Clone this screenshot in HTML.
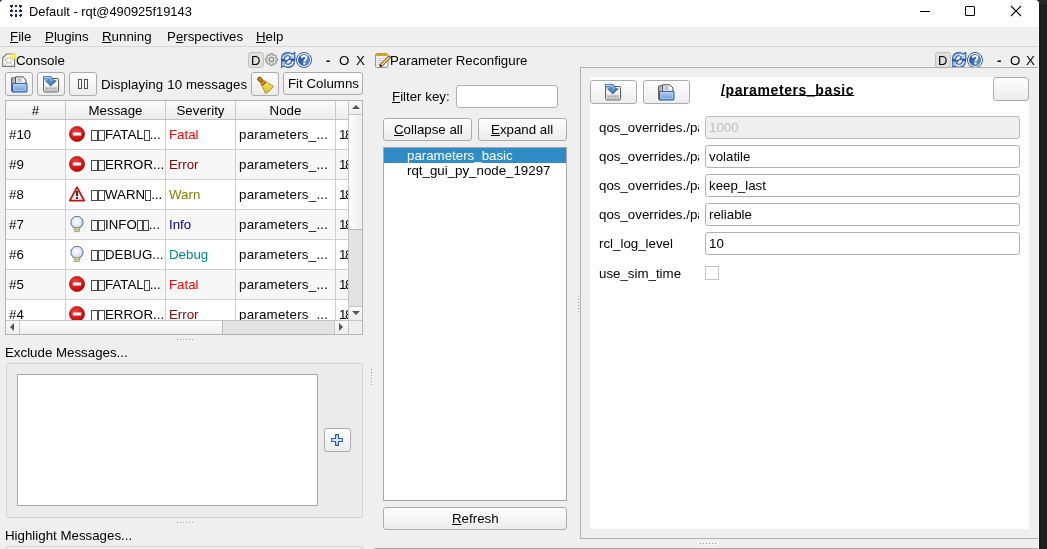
<!DOCTYPE html><html><head><meta charset="utf-8"><style>
*{margin:0;padding:0;box-sizing:content-box}
html,body{width:1047px;height:549px;overflow:hidden;background:#efefef;font-family:"Liberation Sans",sans-serif;color:#000}
.a{position:absolute}
.t{position:absolute;line-height:15px;white-space:nowrap;font-size:13.3px;will-change:transform}
.btn{position:absolute;border:1px solid #acacac;border-radius:3px;background:linear-gradient(#fefefe,#ececec)}
.u{text-decoration:underline;text-underline-offset:1px}
.tofu{display:inline-block;width:5px;height:9px;border:1px solid #4a4a4a;vertical-align:-2px;margin-right:0px}
.le{position:absolute;border:1px solid #b0b0b0;border-radius:3px;background:#fff}
.dot{position:absolute;width:1px;height:1px;background:#9a9a9a;box-shadow:1px 1px 0 #fff}
</style></head><body><div class="a" style="left:0px;top:0px;width:1039px;height:27px;background:#fff"></div><svg class="a" style="left:9px;top:4px" width="15" height="15" viewBox="0 0 15 15"><g fill="#1c2868"><path d="M1 1h3v2h-1v1h-1v-1h-1z"/><rect x="6" y="1" width="2" height="2"/><path d="M10 1h3v2h-1v1h-1v-1h-1z"/><path d="M2 5h1v1h1v2h-3v-2h1z"/><rect x="6" y="6" width="2" height="2"/><path d="M11 5h1v1h1v2h-3v-2h1z"/><path d="M1 10h2v1h1v1h-1v1h-1v-1h-1z"/><rect x="6" y="10" width="2" height="3"/><path d="M11 10h2v2h-1v1h-1v-1h-1v-1h1z"/></g></svg><div class="t" style="left:28.6px;top:3.8000000000000007px;font-size:12.9px;color:#000">Default - rqt@490925f19143</div><div class="a" style="left:920px;top:11px;width:10px;height:1px;background:#000"></div><div class="a" style="left:965px;top:6px;width:8px;height:8px;border:1px solid #000;border-radius:1px"></div><svg class="a" style="left:1010px;top:5px" width="12" height="12"><path d="M1 1L11 11M11 1L1 11" stroke="#000" stroke-width="1.1"/></svg><div class="a" style="left:0px;top:46px;width:1039px;height:1px;background:#d6d6d6"></div><div class="t" style="left:10.3px;top:29px;font-size:13.3px;"><span class="u">F</span>ile</div><div class="t" style="left:45.1px;top:29px;font-size:13.3px;"><span class="u">P</span>lugins</div><div class="t" style="left:102.3px;top:29px;font-size:13.3px;"><span class="u">R</span>unning</div><div class="t" style="left:166.5px;top:29px;font-size:13.3px;">P<span class="u">e</span>rspectives</div><div class="t" style="left:256.3px;top:29px;font-size:13.3px;"><span class="u">H</span>elp</div><svg class="a" style="left:2px;top:53px" width="15" height="15" viewBox="0 0 15 15"><path d="M0.7 5 L4.7 1 H12.6 V13.4 H0.7 Z" fill="#fafafa" stroke="#787878" stroke-width="1.1" stroke-linejoin="round"/><path d="M2.3 6.8 C4 4.6 9 4.4 11 6.8 M3 6.5 L5.6 9.8 L2.8 12.2 M10.6 6.5 L8 9.8 L10.8 12.2 M5.6 9.8 H8" fill="none" stroke="#b0b0b0" stroke-width="0.9"/><circle cx="10.8" cy="3.3" r="2.9" fill="#f3ee2a"/><circle cx="10.8" cy="3.3" r="1.2" fill="#fffccc"/></svg><div class="t" style="left:16px;top:53px;font-size:13.3px;">Console</div><div class="a" style="left:248px;top:52px;width:14px;height:14px;border:1px solid #c2c2c2;border-radius:3px;background:#e0e0e0"></div><div class="t" style="left:250.5px;top:53px;font-size:13.3px;font-size:13px">D</div><svg class="a" style="left:264px;top:52px" width="15" height="15" viewBox="0 0 15 15"><path d="M11.47 5.85 L13.41 6.46 L13.41 8.54 L11.47 9.15 L11.47 9.15 L12.41 10.94 L10.94 12.41 L9.15 11.47 L9.15 11.47 L8.54 13.41 L6.46 13.41 L5.85 11.47 L5.85 11.47 L4.06 12.41 L2.59 10.94 L3.53 9.15 L3.53 9.15 L1.59 8.54 L1.59 6.46 L3.53 5.85 L3.53 5.85 L2.59 4.06 L4.06 2.59 L5.85 3.53 L5.85 3.53 L6.46 1.59 L8.54 1.59 L9.15 3.53 L9.15 3.53 L10.94 2.59 L12.41 4.06 L11.47 5.85 Z" fill="#e4e7e0" stroke="#7c7c7c" stroke-width="1" stroke-linejoin="round"/><circle cx="7.5" cy="7.5" r="2.3" fill="#d6d9d2" stroke="#8a8a8a" stroke-width="1.1"/><circle cx="7.5" cy="7.5" r="0.8" fill="#f4f4f4"/></svg><svg class="a" style="left:281px;top:52px" width="15" height="16" viewBox="0 0 15 16"><defs><linearGradient id="rf281" x1="0" y1="0" x2="1" y2="1"><stop offset="0" stop-color="#5f8fd0"/><stop offset="0.55" stop-color="#e2edf9"/><stop offset="1" stop-color="#9bbde6"/></linearGradient></defs><g fill="url(#rf281)" stroke="#2a5aa5" stroke-width="1.1" stroke-linejoin="miter"><path d="M0.5 7.4 C0.5 2.6 3.6 0.6 7 0.6 C9 0.6 10.4 1.2 11.4 2.2 L13.8 0.3 V7.4 H7.6 L9.6 5.2 C8.8 4.2 7.9 3.7 7 3.7 C4.8 3.7 3.5 5.2 3.5 7.4 Z"/><path d="M13.5 8.6 C13.5 13.4 10.4 15.4 7 15.4 C5 15.4 3.6 14.8 2.6 13.8 L0.2 15.7 V8.6 H6.4 L4.4 10.8 C5.2 11.8 6.1 12.3 7 12.3 C9.2 12.3 10.5 10.8 10.5 8.6 Z"/></g></svg><svg class="a" style="left:296px;top:52px" width="16" height="16" viewBox="0 0 16 16"><defs><linearGradient id="hg296" x1="0" y1="0" x2="1" y2="0.3"><stop offset="0" stop-color="#1f4e98"/><stop offset="1" stop-color="#5c8bcb"/></linearGradient></defs><circle cx="8" cy="8" r="7.5" fill="#fff" stroke="#2b57a0" stroke-width="1"/><circle cx="8" cy="8" r="5.6" fill="url(#hg296)" stroke="#244f96" stroke-width="0.6"/><path d="M5.8 5.9 C5.8 3.2 10.4 3.2 10.4 5.9 C10.4 7.6 8.4 7.6 8.4 9.4" fill="none" stroke="#fff" stroke-width="1.9"/><rect x="7.3" y="10.4" width="2.2" height="2" fill="#fff"/></svg><div class="t" style="left:325.5px;top:53px;font-size:13.3px;font-weight:bold">-</div><div class="t" style="left:339px;top:53px;font-size:13.3px;">O</div><div class="t" style="left:355.5px;top:53px;font-size:13.3px;">X</div><div class="btn" style="left:5px;top:72px;width:26px;height:22px;"></div><svg class="a" style="left:11px;top:76px" width="17" height="17" viewBox="0 0 17 17"><defs><linearGradient id="sg11" x1="0" y1="0" x2="0" y2="1"><stop offset="0" stop-color="#b4cdee"/><stop offset="1" stop-color="#6f9bd6"/></linearGradient><linearGradient id="pg11" x1="0" y1="0" x2="1" y2="0"><stop offset="0" stop-color="#9a9a9a"/><stop offset="1" stop-color="#d8d8d8"/></linearGradient></defs><rect x="0.6" y="1.8" width="4" height="14" rx="0.8" fill="url(#pg11)" stroke="#505050" stroke-width="0.9"/><path d="M4.6 0.8 H11.8 L15 4 V8 H4.6 Z" fill="#f4f4f4" stroke="#3c3c3c" stroke-width="0.9"/><path d="M6.5 3H10.5M6.5 5H10.5" stroke="#8c8c8c" stroke-width="0.9"/><rect x="1.5" y="7.4" width="14.5" height="8.6" rx="0.6" fill="url(#sg11)" stroke="#2b5ea9" stroke-width="1"/><rect x="2.9" y="8.9" width="11.7" height="5.6" fill="none" stroke="#c4d8f2" stroke-width="0.7" opacity="0.8"/></svg><div class="btn" style="left:37px;top:72px;width:26px;height:22px;"></div><svg class="a" style="left:43px;top:76px" width="17" height="17" viewBox="0 0 17 17"><defs><linearGradient id="ig43" x1="0" y1="0" x2="1" y2="1"><stop offset="0" stop-color="#8fc0ea"/><stop offset="1" stop-color="#2a68aa"/></linearGradient></defs><rect x="0.6" y="2.5" width="15" height="13.4" rx="1.2" fill="#f6f6f6" stroke="#585858" stroke-width="1"/><rect x="1.6" y="10.6" width="13" height="4.4" fill="#cdcdcd"/><path d="M3 12.8H5M6.5 12.8H8M9.5 12.8H11M12 12.8H13.5" stroke="#9a9a9a" stroke-width="1"/><path d="M0.2 0.3 H5.5 C8.6 0.3 10.2 2 10.2 4.8 H13.2 L7.6 10 L2.6 4.8 H5.8 C5.8 3.6 5.2 3 4 3 H0.2 Z" fill="url(#ig43)" stroke="#1f5596" stroke-width="0.8"/><path d="M1 1.5 H5.5 C7.5 1.5 8.8 2.6 8.8 5" fill="none" stroke="#d6e8f8" stroke-width="0.8"/></svg><div class="btn" style="left:69px;top:72px;width:26px;height:22px;"></div><div class="a" style="left:78px;top:79px;width:2px;height:8px;border:1px solid #505050"></div><div class="a" style="left:84px;top:79px;width:2px;height:8px;border:1px solid #505050"></div><div class="t" style="left:101px;top:77px;font-size:13.3px;letter-spacing:0.1px">Displaying 10 messages</div><div class="btn" style="left:251px;top:72px;width:26px;height:22px;"></div><svg class="a" style="left:251px;top:72px" width="28" height="24" viewBox="0 0 28 24"><defs><linearGradient id="brg" x1="0" y1="0" x2="1" y2="1"><stop offset="0" stop-color="#f8f070"/><stop offset="1" stop-color="#d8bc10"/></linearGradient></defs><g transform="translate(8,6.5) rotate(47)"><rect x="-1.2" y="-1.9" width="6.6" height="3.8" rx="1.9" fill="#c87a10" stroke="#6e4006" stroke-width="0.8"/><path d="M5 -2.6 L6.6 -2.9 L6.6 2.9 L5 2.6 Z" fill="#d4c030" stroke="#8a7810" stroke-width="0.5"/><rect x="6.4" y="-3" width="1.5" height="6" fill="#d43222"/><path d="M7.9 -3 L15.6 -5.4 Q16.8 0 15.6 5.4 L7.9 3 Z" fill="url(#brg)" stroke="#a08a10" stroke-width="0.8"/></g></svg><div class="btn" style="left:283px;top:72px;width:78px;height:21px;"></div><div class="t" style="left:288px;top:76px;font-size:13.3px;">Fit Columns</div><div class="a" style="left:5px;top:100px;width:358px;height:235px;background:#efefef;border:0"></div><div class="a" style="left:5px;top:100px;width:356px;height:233px;border:1px solid #b4b4b4"></div><div class="a" style="left:6px;top:101px;width:342px;height:219px;overflow:hidden;background:#fff"><div class="a" style="left:0;top:0;width:342px;height:18px;background:linear-gradient(#fbfbfb,#ececec);border-bottom:1px solid #c2c2c2"></div><div class="a" style="left:59px;top:0;width:1px;height:18px;background:#c8c8c8"></div><div class="t" style="left:0px;top:1.5999999999999943px;width:59px;text-align:center">#</div><div class="a" style="left:159px;top:0;width:1px;height:18px;background:#c8c8c8"></div><div class="t" style="left:60px;top:1.5999999999999943px;width:99px;text-align:center">Message</div><div class="a" style="left:229px;top:0;width:1px;height:18px;background:#c8c8c8"></div><div class="t" style="left:160px;top:1.5999999999999943px;width:69px;text-align:center">Severity</div><div class="a" style="left:329px;top:0;width:1px;height:18px;background:#c8c8c8"></div><div class="t" style="left:230px;top:1.5999999999999943px;width:99px;text-align:center">Node</div><div class="a" style="left:0;top:19px;width:342px;height:29px;background:#ffffff;border-bottom:1px solid #d0d0d0"></div><div class="a" style="left:59px;top:19px;width:1px;height:30px;background:#d0d0d0"></div><div class="a" style="left:159px;top:19px;width:1px;height:30px;background:#d0d0d0"></div><div class="a" style="left:229px;top:19px;width:1px;height:30px;background:#d0d0d0"></div><div class="a" style="left:329px;top:19px;width:1px;height:30px;background:#d0d0d0"></div><div class="t" style="left:3px;top:25.6px">#10</div><svg class="a" style="left:63px;top:25px" width="16" height="16" viewBox="0 0 16 16"><defs><radialGradient id="rg0" cx="0.4" cy="0.35" r="0.7"><stop offset="0" stop-color="#f04040"/><stop offset="1" stop-color="#c00000"/></radialGradient></defs><circle cx="8" cy="8" r="7.6" fill="url(#rg0)" stroke="#a00000" stroke-width="0.6"/><rect x="3.8" y="6.5" width="8.4" height="3" fill="#fff"/></svg><div class="t" style="left:85px;top:25.6px"><span class="tofu"></span><span class="tofu"></span>FATAL<span class="tofu" style="width:4px"></span>...</div><div class="t" style="left:163px;top:25.6px;color:#ff0000">Fatal</div><div class="t" style="left:233px;top:25.6px;letter-spacing:0.25px">parameters_...</div><div class="t" style="left:332.5px;top:25.6px">1</div><div class="t" style="left:339px;top:25.6px">8</div><div class="a" style="left:0;top:49px;width:342px;height:29px;background:#f7f7f7;border-bottom:1px solid #d0d0d0"></div><div class="a" style="left:59px;top:49px;width:1px;height:30px;background:#d0d0d0"></div><div class="a" style="left:159px;top:49px;width:1px;height:30px;background:#d0d0d0"></div><div class="a" style="left:229px;top:49px;width:1px;height:30px;background:#d0d0d0"></div><div class="a" style="left:329px;top:49px;width:1px;height:30px;background:#d0d0d0"></div><div class="t" style="left:3px;top:55.599999999999994px">#9</div><svg class="a" style="left:63px;top:55px" width="16" height="16" viewBox="0 0 16 16"><defs><radialGradient id="rg1" cx="0.4" cy="0.35" r="0.7"><stop offset="0" stop-color="#f04040"/><stop offset="1" stop-color="#c00000"/></radialGradient></defs><circle cx="8" cy="8" r="7.6" fill="url(#rg1)" stroke="#a00000" stroke-width="0.6"/><rect x="3.8" y="6.5" width="8.4" height="3" fill="#fff"/></svg><div class="t" style="left:85px;top:55.599999999999994px"><span class="tofu"></span><span class="tofu"></span>ERROR...</div><div class="t" style="left:163px;top:55.599999999999994px;color:#8b0000">Error</div><div class="t" style="left:233px;top:55.599999999999994px;letter-spacing:0.25px">parameters_...</div><div class="t" style="left:332.5px;top:55.599999999999994px">1</div><div class="t" style="left:339px;top:55.599999999999994px">8</div><div class="a" style="left:0;top:79px;width:342px;height:29px;background:#ffffff;border-bottom:1px solid #d0d0d0"></div><div class="a" style="left:59px;top:79px;width:1px;height:30px;background:#d0d0d0"></div><div class="a" style="left:159px;top:79px;width:1px;height:30px;background:#d0d0d0"></div><div class="a" style="left:229px;top:79px;width:1px;height:30px;background:#d0d0d0"></div><div class="a" style="left:329px;top:79px;width:1px;height:30px;background:#d0d0d0"></div><div class="t" style="left:3px;top:85.6px">#8</div><svg class="a" style="left:63px;top:85px" width="16" height="16" viewBox="0 0 16 16"><path d="M8 1.2 L15.2 14.6 H0.8 Z" fill="#f4f4f4" stroke="#c81414" stroke-width="1.8" stroke-linejoin="round"/><rect x="6.9" y="5" width="2.2" height="5" fill="#303030"/><rect x="6.9" y="10.9" width="2.2" height="2" fill="#303030"/></svg><div class="t" style="left:85px;top:85.6px"><span class="tofu"></span><span class="tofu"></span>WARN<span class="tofu" style="width:4px"></span>...</div><div class="t" style="left:163px;top:85.6px;color:#808000">Warn</div><div class="t" style="left:233px;top:85.6px;letter-spacing:0.25px">parameters_...</div><div class="t" style="left:332.5px;top:85.6px">1</div><div class="t" style="left:339px;top:85.6px">8</div><div class="a" style="left:0;top:109px;width:342px;height:29px;background:#f7f7f7;border-bottom:1px solid #d0d0d0"></div><div class="a" style="left:59px;top:109px;width:1px;height:30px;background:#d0d0d0"></div><div class="a" style="left:159px;top:109px;width:1px;height:30px;background:#d0d0d0"></div><div class="a" style="left:229px;top:109px;width:1px;height:30px;background:#d0d0d0"></div><div class="a" style="left:329px;top:109px;width:1px;height:30px;background:#d0d0d0"></div><div class="t" style="left:3px;top:115.6px">#7</div><svg class="a" style="left:63px;top:115px" width="16" height="17" viewBox="0 0 16 17"><defs><radialGradient id="bg3" cx="0.45" cy="0.4" r="0.65"><stop offset="0" stop-color="#ffffff"/><stop offset="0.6" stop-color="#dfe8f4"/><stop offset="1" stop-color="#9fb4d8"/></radialGradient></defs><circle cx="8" cy="6.4" r="6.1" fill="url(#bg3)" stroke="#4e5f96" stroke-width="0.9"/><path d="M6.6 9 C7 6 8.5 4.5 10.6 4.6" fill="none" stroke="#fff" stroke-width="1"/><path d="M5.7 11.6 H10.3 V15.6 H5.7 Z" fill="#e6e2a8" stroke="#8a8450" stroke-width="0.7"/><path d="M5.7 13.6H10.3" stroke="#8a8450" stroke-width="0.6"/></svg><div class="t" style="left:85px;top:115.6px"><span class="tofu"></span><span class="tofu"></span>INFO<span class="tofu" style="width:4px"></span><span class="tofu" style="width:4px"></span>...</div><div class="t" style="left:163px;top:115.6px;color:#00008b">Info</div><div class="t" style="left:233px;top:115.6px;letter-spacing:0.25px">parameters_...</div><div class="t" style="left:332.5px;top:115.6px">1</div><div class="t" style="left:339px;top:115.6px">8</div><div class="a" style="left:0;top:139px;width:342px;height:29px;background:#ffffff;border-bottom:1px solid #d0d0d0"></div><div class="a" style="left:59px;top:139px;width:1px;height:30px;background:#d0d0d0"></div><div class="a" style="left:159px;top:139px;width:1px;height:30px;background:#d0d0d0"></div><div class="a" style="left:229px;top:139px;width:1px;height:30px;background:#d0d0d0"></div><div class="a" style="left:329px;top:139px;width:1px;height:30px;background:#d0d0d0"></div><div class="t" style="left:3px;top:145.6px">#6</div><svg class="a" style="left:63px;top:145px" width="16" height="17" viewBox="0 0 16 17"><defs><radialGradient id="bg4" cx="0.45" cy="0.4" r="0.65"><stop offset="0" stop-color="#ffffff"/><stop offset="0.6" stop-color="#dfe8f4"/><stop offset="1" stop-color="#9fb4d8"/></radialGradient></defs><circle cx="8" cy="6.4" r="6.1" fill="url(#bg4)" stroke="#4e5f96" stroke-width="0.9"/><path d="M6.6 9 C7 6 8.5 4.5 10.6 4.6" fill="none" stroke="#fff" stroke-width="1"/><path d="M5.7 11.6 H10.3 V15.6 H5.7 Z" fill="#e6e2a8" stroke="#8a8450" stroke-width="0.7"/><path d="M5.7 13.6H10.3" stroke="#8a8450" stroke-width="0.6"/></svg><div class="t" style="left:85px;top:145.6px"><span class="tofu"></span><span class="tofu"></span>DEBUG...</div><div class="t" style="left:163px;top:145.6px;color:#008b8b">Debug</div><div class="t" style="left:233px;top:145.6px;letter-spacing:0.25px">parameters_...</div><div class="t" style="left:332.5px;top:145.6px">1</div><div class="t" style="left:339px;top:145.6px">8</div><div class="a" style="left:0;top:169px;width:342px;height:29px;background:#f7f7f7;border-bottom:1px solid #d0d0d0"></div><div class="a" style="left:59px;top:169px;width:1px;height:30px;background:#d0d0d0"></div><div class="a" style="left:159px;top:169px;width:1px;height:30px;background:#d0d0d0"></div><div class="a" style="left:229px;top:169px;width:1px;height:30px;background:#d0d0d0"></div><div class="a" style="left:329px;top:169px;width:1px;height:30px;background:#d0d0d0"></div><div class="t" style="left:3px;top:175.6px">#5</div><svg class="a" style="left:63px;top:175px" width="16" height="16" viewBox="0 0 16 16"><defs><radialGradient id="rg5" cx="0.4" cy="0.35" r="0.7"><stop offset="0" stop-color="#f04040"/><stop offset="1" stop-color="#c00000"/></radialGradient></defs><circle cx="8" cy="8" r="7.6" fill="url(#rg5)" stroke="#a00000" stroke-width="0.6"/><rect x="3.8" y="6.5" width="8.4" height="3" fill="#fff"/></svg><div class="t" style="left:85px;top:175.6px"><span class="tofu"></span><span class="tofu"></span>FATAL<span class="tofu" style="width:4px"></span>...</div><div class="t" style="left:163px;top:175.6px;color:#ff0000">Fatal</div><div class="t" style="left:233px;top:175.6px;letter-spacing:0.25px">parameters_...</div><div class="t" style="left:332.5px;top:175.6px">1</div><div class="t" style="left:339px;top:175.6px">8</div><div class="a" style="left:0;top:199px;width:342px;height:29px;background:#ffffff;border-bottom:1px solid #d0d0d0"></div><div class="a" style="left:59px;top:199px;width:1px;height:30px;background:#d0d0d0"></div><div class="a" style="left:159px;top:199px;width:1px;height:30px;background:#d0d0d0"></div><div class="a" style="left:229px;top:199px;width:1px;height:30px;background:#d0d0d0"></div><div class="a" style="left:329px;top:199px;width:1px;height:30px;background:#d0d0d0"></div><div class="t" style="left:3px;top:205.6px">#4</div><svg class="a" style="left:63px;top:205px" width="16" height="16" viewBox="0 0 16 16"><defs><radialGradient id="rg6" cx="0.4" cy="0.35" r="0.7"><stop offset="0" stop-color="#f04040"/><stop offset="1" stop-color="#c00000"/></radialGradient></defs><circle cx="8" cy="8" r="7.6" fill="url(#rg6)" stroke="#a00000" stroke-width="0.6"/><rect x="3.8" y="6.5" width="8.4" height="3" fill="#fff"/></svg><div class="t" style="left:85px;top:205.6px"><span class="tofu"></span><span class="tofu"></span>ERROR...</div><div class="t" style="left:163px;top:205.6px;color:#8b0000">Error</div><div class="t" style="left:233px;top:205.6px;letter-spacing:0.25px">parameters_...</div><div class="t" style="left:332.5px;top:205.6px">1</div><div class="t" style="left:339px;top:205.6px">8</div></div><div class="a" style="left:348px;top:101px;width:1px;height:219px;background:#c4c4c4"></div><div class="a" style="left:349px;top:101px;width:13px;height:219px;background:#e3e3e3"></div><div class="a" style="left:349px;top:101px;width:13px;height:13px;background:linear-gradient(#fafafa,#ededed);border-bottom:1px solid #c8c8c8"></div><div class="a" style="left:352px;top:105px;width:0;height:0;border-left:4px solid transparent;border-right:4px solid transparent;border-bottom:4px solid #555"></div><div class="a" style="left:349px;top:115px;width:13px;height:114px;background:linear-gradient(90deg,#fdfdfd,#eeeeee);border-bottom:1px solid #b8b8b8"></div><div class="a" style="left:349px;top:306px;width:13px;height:14px;background:linear-gradient(#fafafa,#ededed);border-top:1px solid #c8c8c8"></div><div class="a" style="left:352px;top:311px;width:0;height:0;border-left:4px solid transparent;border-right:4px solid transparent;border-top:4px solid #555"></div><div class="a" style="left:6px;top:320px;width:356px;height:1px;background:#c4c4c4"></div><div class="a" style="left:6px;top:321px;width:342px;height:13px;background:#e3e3e3"></div><div class="a" style="left:6px;top:321px;width:13px;height:13px;background:linear-gradient(#fafafa,#ededed);border-right:1px solid #c8c8c8"></div><div class="a" style="left:10px;top:323px;width:0;height:0;border-top:4px solid transparent;border-bottom:4px solid transparent;border-right:4px solid #555"></div><div class="a" style="left:20px;top:321px;width:202px;height:13px;background:linear-gradient(#fdfdfd,#eeeeee);border-right:1px solid #b8b8b8"></div><div class="a" style="left:334px;top:321px;width:14px;height:13px;background:linear-gradient(#fafafa,#ededed);border-left:1px solid #c8c8c8"></div><div class="a" style="left:339px;top:323px;width:0;height:0;border-top:4px solid transparent;border-bottom:4px solid transparent;border-left:4px solid #555"></div><div class="a" style="left:348px;top:320px;width:1px;height:14px;background:#c4c4c4"></div><div class="a" style="left:349px;top:321px;width:13px;height:13px;background:#efefef"></div><div class="dot" style="left:177px;top:339px"></div><div class="dot" style="left:180px;top:339px"></div><div class="dot" style="left:183px;top:339px"></div><div class="dot" style="left:186px;top:339px"></div><div class="dot" style="left:189px;top:339px"></div><div class="dot" style="left:192px;top:339px"></div><div class="t" style="left:5px;top:345px;font-size:13.3px;">Exclude Messages...</div><div class="a" style="left:6px;top:363px;width:355px;height:153px;border:1px solid #d4d4d4;border-radius:2px;background:#ebebeb"></div><div class="a" style="left:17px;top:374px;width:299px;height:130px;border:1px solid #a8a8a8;background:#fff"></div><div class="btn" style="left:324px;top:428px;width:25px;height:22px;"></div><svg class="a" style="left:331px;top:434px" width="12" height="12" viewBox="0 0 12 12"><defs><linearGradient id="plg" x1="0" y1="0" x2="0" y2="1"><stop offset="0" stop-color="#b4cdee"/><stop offset="0.5" stop-color="#dde9f8"/><stop offset="1" stop-color="#a8c4ea"/></linearGradient></defs><path d="M4.5 0.6H7.5V4.5H11.4V7.5H7.5V11.4H4.5V7.5H0.6V4.5H4.5Z" fill="url(#plg)" stroke="#2d62aa" stroke-width="1.1" stroke-linejoin="round"/></svg><div class="dot" style="left:177px;top:522px"></div><div class="dot" style="left:180px;top:522px"></div><div class="dot" style="left:183px;top:522px"></div><div class="dot" style="left:186px;top:522px"></div><div class="dot" style="left:189px;top:522px"></div><div class="dot" style="left:192px;top:522px"></div><div class="t" style="left:5px;top:528px;font-size:13.3px;">Highlight Messages...</div><div class="a" style="left:6px;top:546px;width:355px;height:20px;border:1px solid #d4d4d4;border-radius:2px;background:#ebebeb"></div><div class="dot" style="left:371px;top:369px"></div><div class="dot" style="left:371px;top:372px"></div><div class="dot" style="left:371px;top:375px"></div><div class="dot" style="left:371px;top:378px"></div><div class="dot" style="left:371px;top:381px"></div><div class="dot" style="left:371px;top:384px"></div><svg class="a" style="left:375px;top:52px" width="16" height="16" viewBox="0 0 16 16"><rect x="0.6" y="2" width="12.4" height="13.4" rx="0.8" fill="#f8f8f8" stroke="#8c8c8c" stroke-width="1"/><path d="M2.5 6.5H10M2.5 8.5H10M2.5 10.5H8M2.5 12.5H7" stroke="#c0c0c0" stroke-width="0.8"/><g fill="#e0b400" stroke="#a88000" stroke-width="0.5"><circle cx="2.6" cy="2.6" r="1.3"/><circle cx="4.6" cy="2.6" r="1.3"/><circle cx="6.6" cy="2.6" r="1.3"/><circle cx="8.6" cy="2.6" r="1.3"/><circle cx="10.6" cy="2.6" r="1.3"/></g><path d="M6 13.5 L14.3 5.2" stroke="#9a6010" stroke-width="3.4" stroke-linecap="round"/><path d="M6.3 13.2 L14 5.5" stroke="#f2d490" stroke-width="1.6" stroke-linecap="round"/><path d="M4.6 14.8 L5.4 12.3 L7.1 14 Z" fill="#111"/></svg><div class="t" style="left:390px;top:53px;font-size:13.3px;">Parameter Reconfigure</div><div class="a" style="left:935px;top:52px;width:14px;height:14px;border:1px solid #c2c2c2;border-radius:3px;background:#e0e0e0"></div><div class="t" style="left:937.5px;top:53px;font-size:13.3px;font-size:13px">D</div><svg class="a" style="left:952px;top:52px" width="15" height="16" viewBox="0 0 15 16"><defs><linearGradient id="rf952" x1="0" y1="0" x2="1" y2="1"><stop offset="0" stop-color="#5f8fd0"/><stop offset="0.55" stop-color="#e2edf9"/><stop offset="1" stop-color="#9bbde6"/></linearGradient></defs><g fill="url(#rf952)" stroke="#2a5aa5" stroke-width="1.1" stroke-linejoin="miter"><path d="M0.5 7.4 C0.5 2.6 3.6 0.6 7 0.6 C9 0.6 10.4 1.2 11.4 2.2 L13.8 0.3 V7.4 H7.6 L9.6 5.2 C8.8 4.2 7.9 3.7 7 3.7 C4.8 3.7 3.5 5.2 3.5 7.4 Z"/><path d="M13.5 8.6 C13.5 13.4 10.4 15.4 7 15.4 C5 15.4 3.6 14.8 2.6 13.8 L0.2 15.7 V8.6 H6.4 L4.4 10.8 C5.2 11.8 6.1 12.3 7 12.3 C9.2 12.3 10.5 10.8 10.5 8.6 Z"/></g></svg><svg class="a" style="left:967px;top:52px" width="16" height="16" viewBox="0 0 16 16"><defs><linearGradient id="hg967" x1="0" y1="0" x2="1" y2="0.3"><stop offset="0" stop-color="#1f4e98"/><stop offset="1" stop-color="#5c8bcb"/></linearGradient></defs><circle cx="8" cy="8" r="7.5" fill="#fff" stroke="#2b57a0" stroke-width="1"/><circle cx="8" cy="8" r="5.6" fill="url(#hg967)" stroke="#244f96" stroke-width="0.6"/><path d="M5.8 5.9 C5.8 3.2 10.4 3.2 10.4 5.9 C10.4 7.6 8.4 7.6 8.4 9.4" fill="none" stroke="#fff" stroke-width="1.9"/><rect x="7.3" y="10.4" width="2.2" height="2" fill="#fff"/></svg><div class="t" style="left:996.5px;top:53px;font-size:13.3px;font-weight:bold">-</div><div class="t" style="left:1010px;top:53px;font-size:13.3px;">O</div><div class="t" style="left:1025.5px;top:53px;font-size:13.3px;">X</div><div class="t" style="left:392px;top:89px;font-size:13.3px;"><span class="u">F</span>ilter key:</div><div class="le" style="left:456px;top:85px;width:100px;height:21px"></div><div class="btn" style="left:383px;top:118px;width:87px;height:21px;"></div><div class="t" style="left:393.5px;top:121.5px;font-size:13.3px;"><span class="u">C</span>ollapse all</div><div class="btn" style="left:478px;top:118px;width:87px;height:21px;"></div><div class="t" style="left:491px;top:121.5px;font-size:13.3px;"><span class="u">E</span>xpand all</div><div class="a" style="left:383px;top:147px;width:182px;height:352px;border:1px solid #a8a8a8;background:#fff"></div><div class="a" style="left:384px;top:148px;width:182px;height:15px;background:#308cc6"></div><div class="t" style="left:407px;top:147.6px;font-size:13.3px;color:#fff">parameters_basic</div><div class="t" style="left:407px;top:162.6px;font-size:13.3px;">rqt_gui_py_node_19297</div><div class="btn" style="left:383px;top:507px;width:182px;height:21px;"></div><div class="t" style="left:452px;top:510.5px;font-size:13.3px;"><span class="u">R</span>efresh</div><div class="dot" style="left:578px;top:296px"></div><div class="dot" style="left:578px;top:299px"></div><div class="dot" style="left:578px;top:302px"></div><div class="dot" style="left:578px;top:305px"></div><div class="dot" style="left:578px;top:308px"></div><div class="dot" style="left:578px;top:311px"></div><div class="a" style="left:580px;top:67px;width:470px;height:470px;border:1px solid #b0b0b0;background:#efefef"></div><div class="a" style="left:590px;top:77px;width:439px;height:452px;background:#fff"></div><div class="btn" style="left:590px;top:80px;width:45px;height:22px;"></div><svg class="a" style="left:605px;top:84px" width="17" height="17" viewBox="0 0 17 17"><defs><linearGradient id="ig605" x1="0" y1="0" x2="1" y2="1"><stop offset="0" stop-color="#8fc0ea"/><stop offset="1" stop-color="#2a68aa"/></linearGradient></defs><rect x="0.6" y="2.5" width="15" height="13.4" rx="1.2" fill="#f6f6f6" stroke="#585858" stroke-width="1"/><rect x="1.6" y="10.6" width="13" height="4.4" fill="#cdcdcd"/><path d="M3 12.8H5M6.5 12.8H8M9.5 12.8H11M12 12.8H13.5" stroke="#9a9a9a" stroke-width="1"/><path d="M0.2 0.3 H5.5 C8.6 0.3 10.2 2 10.2 4.8 H13.2 L7.6 10 L2.6 4.8 H5.8 C5.8 3.6 5.2 3 4 3 H0.2 Z" fill="url(#ig605)" stroke="#1f5596" stroke-width="0.8"/><path d="M1 1.5 H5.5 C7.5 1.5 8.8 2.6 8.8 5" fill="none" stroke="#d6e8f8" stroke-width="0.8"/></svg><div class="btn" style="left:643px;top:80px;width:45px;height:22px;"></div><svg class="a" style="left:658px;top:84px" width="17" height="17" viewBox="0 0 17 17"><defs><linearGradient id="sg658" x1="0" y1="0" x2="0" y2="1"><stop offset="0" stop-color="#b4cdee"/><stop offset="1" stop-color="#6f9bd6"/></linearGradient><linearGradient id="pg658" x1="0" y1="0" x2="1" y2="0"><stop offset="0" stop-color="#9a9a9a"/><stop offset="1" stop-color="#d8d8d8"/></linearGradient></defs><rect x="0.6" y="1.8" width="4" height="14" rx="0.8" fill="url(#pg658)" stroke="#505050" stroke-width="0.9"/><path d="M4.6 0.8 H11.8 L15 4 V8 H4.6 Z" fill="#f4f4f4" stroke="#3c3c3c" stroke-width="0.9"/><path d="M6.5 3H10.5M6.5 5H10.5" stroke="#8c8c8c" stroke-width="0.9"/><rect x="1.5" y="7.4" width="14.5" height="8.6" rx="0.6" fill="url(#sg658)" stroke="#2b5ea9" stroke-width="1"/><rect x="2.9" y="8.9" width="11.7" height="5.6" fill="none" stroke="#c4d8f2" stroke-width="0.7" opacity="0.8"/></svg><div class="t" style="left:721px;top:83.2px;font-size:14px;font-weight:bold;font-size:14px;text-decoration:underline;text-underline-offset:0px;letter-spacing:0.6px">/parameters_basic</div><div class="btn" style="left:993px;top:77px;width:34px;height:22px;"></div><div class="t" style="left:599px;top:120px;width:100px;overflow:hidden">qos_overrides./parameter_events/publisher/depth</div><div class="le" style="left:705px;top:116px;width:313px;height:21px;background:#efefef;border-color:#bdbdbd"></div><div class="t" style="left:708.5px;top:119.5px;font-size:13.3px;color:#bebebe">1000</div><div class="t" style="left:599px;top:149px;width:100px;overflow:hidden">qos_overrides./parameter_events/publisher/durability</div><div class="le" style="left:705px;top:145px;width:313px;height:21px"></div><div class="t" style="left:708.5px;top:148.5px;font-size:13.3px;">volatile</div><div class="t" style="left:599px;top:178px;width:100px;overflow:hidden">qos_overrides./parameter_events/publisher/history</div><div class="le" style="left:705px;top:174px;width:313px;height:21px"></div><div class="t" style="left:708.5px;top:177.5px;font-size:13.3px;">keep_last</div><div class="t" style="left:599px;top:207px;width:100px;overflow:hidden">qos_overrides./parameter_events/publisher/reliability</div><div class="le" style="left:705px;top:203px;width:313px;height:21px"></div><div class="t" style="left:708.5px;top:206.5px;font-size:13.3px;">reliable</div><div class="t" style="left:599px;top:236px;font-size:13.3px;">rcl_log_level</div><div class="le" style="left:705px;top:232px;width:313px;height:21px"></div><div class="t" style="left:708.5px;top:235.5px;font-size:13.3px;">10</div><div class="t" style="left:599px;top:265.5px;font-size:13.3px;">use_sim_time</div><div class="a" style="left:705px;top:266px;width:12px;height:12px;border:1px solid #c4c4c4;background:#fff"></div><div class="dot" style="left:700px;top:543px"></div><div class="dot" style="left:703px;top:543px"></div><div class="dot" style="left:706px;top:543px"></div><div class="dot" style="left:709px;top:543px"></div><div class="dot" style="left:712px;top:543px"></div><div class="dot" style="left:715px;top:543px"></div><div class="a" style="left:374px;top:548px;width:665px;height:1px;background:#a8a8a8"></div><div class="a" style="left:1038px;top:27px;width:1px;height:522px;background:#f4f4f4"></div><div class="a" style="left:1039px;top:0px;width:8px;height:549px;background:#1f1f1f"></div><div class="a" style="left:1039px;top:0px;width:8px;height:5px;background:#262626"></div><div class="a" style="left:1039px;top:5px;width:8px;height:1px;background:#141414"></div><div class="a" style="left:1039px;top:6px;width:2px;height:543px;background:#1a1a1a"></div><svg class="a" style="left:0;top:0" width="5" height="5"><path d="M0 0 H3.5 A3.5 3.5 0 0 0 0 3.5 Z" fill="#2a2a2a"/></svg><svg class="a" style="left:1034px;top:0" width="5" height="5"><path d="M5 0 H1 A4 4 0 0 1 5 4 Z" fill="#262626"/></svg></body></html>
